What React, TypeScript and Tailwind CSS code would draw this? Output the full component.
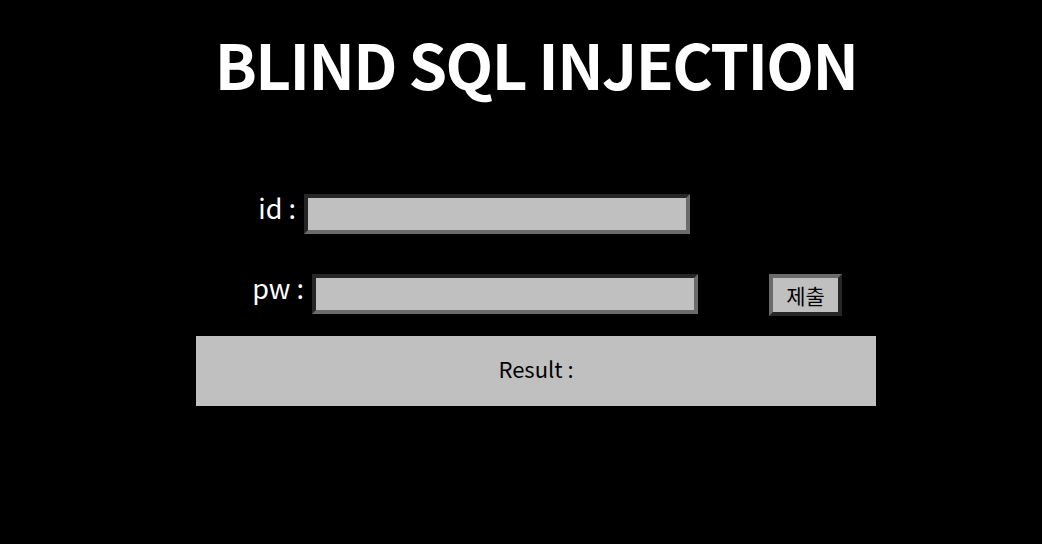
const font = { fontFamily: '"Noto Sans CJK KR", "Noto Sans", sans-serif' };

function Field({ className }: { className?: string }) {
  return (
    <input
      type="text"
      className={
        "h-[40px] w-[386px] bg-[#c0c0c0] border-4 border-solid border-t-[#262626] border-l-[#262626] border-b-[#6b6b6b] border-r-[#6b6b6b] outline-none " +
        (className ?? "")
      }
    />
  );
}

export default function App() {
  return (
    <div className="w-[1042px] h-[544px] bg-black text-white overflow-hidden" style={font}>
      <div className="ml-[196px] w-[680px] flex flex-col">
        <h1 className="mt-[31px] text-center whitespace-nowrap text-[62px] leading-[64px] font-bold tracking-[-1.6px]">
          BLIND SQL INJECTION
        </h1>

        {/* id */}
        <div className="mt-[99px] flex items-start">
          <label className="w-[100px] text-right text-[27px] leading-none">id :</label>
          <Field className="ml-[8px]" />
        </div>

        {/* pw + submit */}
        <div className="mt-[40px] flex items-start">
          <label className="w-[108px] text-right text-[27px] leading-none">pw :</label>
          <Field className="ml-[8px]" />
          <button
            type="button"
            className="ml-[71px] h-[42px] w-[73px] bg-[#c0c0c0] text-black text-[21px] leading-none border-4 border-solid border-t-[#6b6b6b] border-l-[#6b6b6b] border-b-[#262626] border-r-[#262626]"
          >
            제출
          </button>
        </div>

        <div className="mt-[20px] h-[70px] w-[680px] pb-[6px] bg-[#c0c0c0] text-black flex items-center justify-center text-[22px]">
          Result :
        </div>
      </div>
    </div>
  );
}
